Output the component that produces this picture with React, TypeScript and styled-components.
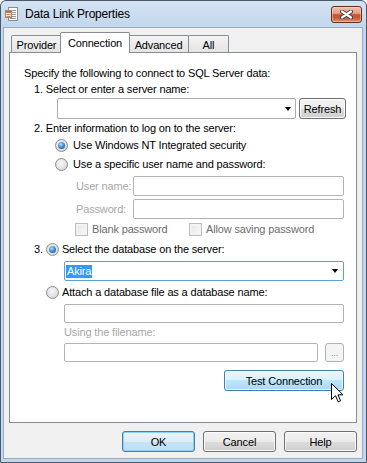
import React from "react";
import styled, { createGlobalStyle, css } from "styled-components";

const GlobalStyle = createGlobalStyle`
  html, body { margin: 0; padding: 0; background: #ffffff; }
  body {
    font-family: "Liberation Sans", Arial, sans-serif;
    font-size: 11px;
    letter-spacing: -0.15px;
    color: #000;
  }
  *, *::before, *::after { box-sizing: border-box; }
`;

const Window = styled.div`
  position: relative;
  width: 367px;
  height: 463px;
  border: 1px solid #4b5a6b;
  border-radius: 6px 6px 0 0;
  background: linear-gradient(#d4e3f3 0px, #c2d6ec 26px, #c2d6ec 100%);
  display: flex;
  flex-direction: column;
  overflow: hidden;
`;

const TitleBar = styled.div`
  flex: none;
  height: 26px;
  display: flex;
  align-items: center;
  padding: 0 4px;
`;

const TitleText = styled.div`
  flex: 1;
  margin-left: 7px;
  font-size: 12px;
  letter-spacing: -0.2px;
  color: #000;
`;

const CloseButton = styled.div`
  width: 31px;
  height: 17px;
  border: 1px solid #6b2a1a;
  border-radius: 3px;
  background: linear-gradient(#efbfac 0%, #e6a088 42%, #c4532f 52%, #c8603c 75%, #e09578 100%);
  box-shadow: inset 0 0 0 1px rgba(255, 225, 210, 0.45);
  display: flex;
  align-items: center;
  justify-content: center;
`;

const Client = styled.div`
  flex: 1;
  margin: 0 3px 3px 2px;
  border: 1px solid #98abc2;
  background: #f0f0f0;
  display: flex;
  flex-direction: column;
  padding: 4px 5px 6px 5px;
`;

const TabStrip = styled.div`
  position: relative;
  z-index: 1;
  flex: none;
  height: 20px;
  display: flex;
  align-items: flex-end;
  padding-left: 2px;
`;

const Tab = styled.div<{ $w: number; $active?: boolean; $ml?: number; $mr?: number }>`
  position: relative;
  flex: none;
  width: ${(p) => p.$w}px;
  height: 17px;
  margin-left: ${(p) => p.$ml ?? 0}px;
  margin-right: ${(p) => p.$mr ?? 0}px;
  border: 1px solid #898c95;
  border-bottom: none;
  border-radius: 2px 2px 0 0;
  background: linear-gradient(#f4f4f4, #e4e4e4);
  display: flex;
  align-items: center;
  justify-content: center;
  padding-top: 1px;
  ${(p) =>
    p.$active &&
    css`
      z-index: 2;
      height: 21px;
      margin-bottom: -1px;
      background: #ffffff;
      padding-top: 0;
      padding-bottom: 1px;
    `}
`;

const Panel = styled.div`
  flex: 1;
  border: 1px solid #898c95;
  background: #ffffff;
  display: flex;
  flex-direction: column;
  padding: 0 12px 0 0;
`;

const Row = styled.div<{ $indent: number; $mt: number; $h: number; $gap?: number }>`
  flex: none;
  display: flex;
  align-items: center;
  height: ${(p) => p.$h}px;
  margin-top: ${(p) => p.$mt}px;
  margin-left: ${(p) => p.$indent}px;
  gap: ${(p) => p.$gap ?? 0}px;
  white-space: nowrap;
`;

const Text = styled.span<{ $tone?: "label" | "check"; $w?: number }>`
  flex: none;
  color: ${(p) => (p.$tone === "label" ? "#a7a7a7" : p.$tone === "check" ? "#6d6d6d" : "#000")};
  ${(p) => p.$w !== undefined && css`width: ${p.$w}px;`}
`;

const Radio = styled.span<{ $checked?: boolean }>`
  position: relative;
  flex: none;
  width: 13px;
  height: 13px;
  border-radius: 50%;
  border: 1px solid #8d8e8e;
  background: radial-gradient(circle at 45% 40%, #f8f8f8 0%, #e6e6e6 45%, #c9c9c9 100%);
  ${(p) =>
    p.$checked &&
    css`
      &::after {
        content: "";
        position: absolute;
        left: 2px;
        top: 2px;
        width: 7px;
        height: 7px;
        border-radius: 50%;
        background: radial-gradient(circle at 40% 35%, #b9e0ff 0%, #4a98e4 40%, #0f3f86 100%);
      }
    `}
`;

const CheckBox = styled.span`
  flex: none;
  width: 13px;
  height: 13px;
  border: 1px solid #bdbdbd;
  background: linear-gradient(135deg, #e3e3e3, #fbfbfb);
  box-shadow: inset 0 0 0 2px #f3f3f3;
`;

const CheckGroup = styled.div<{ $w?: number }>`
  flex: none;
  display: flex;
  align-items: center;
  gap: 4px;
  ${(p) => p.$w !== undefined && css`width: ${p.$w}px;`}
`;

const Combo = styled.div<{ $w: number; $h: number; $focus?: boolean }>`
  flex: none;
  width: ${(p) => p.$w}px;
  height: ${(p) => p.$h}px;
  border: 1px solid ${(p) => (p.$focus ? "#5d9fe0" : "#acacac")};
  border-radius: 2px;
  background: #ffffff;
  display: flex;
  align-items: center;
  justify-content: space-between;
  padding: 0 ${(p) => (p.$focus ? 5 : 4)}px 0 1px;
`;

const Arrow = styled.span`
  flex: none;
  width: 0;
  height: 0;
  border-left: 3.5px solid transparent;
  border-right: 3.5px solid transparent;
  border-top: 4px solid #000;
`;

const Selected = styled.span`
  background: #3399ff;
  color: #ffffff;
  padding: 0 1px;
  line-height: 13px;
`;

const TextBox = styled.div<{ $w: number; $h: number }>`
  flex: none;
  width: ${(p) => p.$w}px;
  height: ${(p) => p.$h}px;
  border: 1px solid #b4b4b4;
  border-radius: 2px;
  background: #ffffff;
`;

type Variant = "normal" | "default" | "hot" | "disabled";

const Button = styled.button<{ $w: number; $h: number; $variant?: Variant }>`
  flex: none;
  width: ${(p) => p.$w}px;
  height: ${(p) => p.$h}px;
  margin: 0;
  padding: 0;
  font: inherit;
  letter-spacing: inherit;
  color: #000;
  border-radius: 3px;
  border: 1px solid #707070;
  background: linear-gradient(#f2f2f2 0%, #ebebeb 50%, #dddddd 50%, #cfcfcf 100%);
  box-shadow: inset 0 0 0 1px #fbfbfb;
  display: flex;
  align-items: center;
  justify-content: center;
  ${(p) =>
    p.$variant === "default" &&
    css`
      border-color: #3c7fb1;
      background: linear-gradient(#e9f4fb 0%, #dcedf8 50%, #c6e3f5 50%, #bddef3 100%);
      box-shadow: inset 0 0 0 1px #8fd0f4;
    `}
  ${(p) =>
    p.$variant === "hot" &&
    css`
      border-color: #3c7fb1;
      background: linear-gradient(#eaf6fd 0%, #d9f0fc 50%, #bee6fd 50%, #a7d9f5 100%);
      box-shadow: inset 0 0 0 1px #f4fbfe;
    `}
  ${(p) =>
    p.$variant === "disabled" &&
    css`
      border-color: #adb2b5;
      background: #f4f4f4;
      box-shadow: none;
      color: #7f8fa8;
      align-items: flex-end;
      padding-bottom: 3px;
      font-size: 9px;
    `}
`;

const ButtonBar = styled.div`
  flex: none;
  display: flex;
  justify-content: flex-end;
  gap: 8px;
  margin-top: 8px;
`;

const Cursor = styled.svg`
  position: absolute;
  left: 330px;
  top: 382px;
`;

const TitleIcon = () => (
  <svg width="13" height="14" viewBox="0 0 13 14">
    <rect x="3.5" y="0.5" width="9" height="13" fill="#ffffff" stroke="#8c8c8c" />
    <rect x="5" y="3" width="6" height="1" fill="#9a9a9a" />
    <rect x="5" y="5" width="6" height="1" fill="#9a9a9a" />
    <rect x="5" y="7" width="6" height="1" fill="#9a9a9a" />
    <rect x="5" y="9" width="6" height="1" fill="#9a9a9a" />
    <rect x="5" y="11" width="6" height="1" fill="#9a9a9a" />
    <rect x="0.5" y="3.5" width="6" height="7" fill="#f6efe6" stroke="#8c8c8c" />
    <rect x="1" y="4" width="5" height="2" fill="#e0682c" />
    <rect x="1.5" y="7" width="4" height="1" fill="#d9833f" />
    <rect x="1.5" y="9" width="4" height="1" fill="#d9833f" />
  </svg>
);

const CloseGlyph = () => (
  <svg width="13" height="9" viewBox="0 0 13 9">
    <path d="M2 1.5 L11 7.5 M11 1.5 L2 7.5" stroke="#3b3b3b" strokeWidth="4" strokeLinecap="round" />
    <path d="M2 1.5 L11 7.5 M11 1.5 L2 7.5" stroke="#ffffff" strokeWidth="2.2" strokeLinecap="round" />
  </svg>
);

export default function App() {
  return (
    <>
      <GlobalStyle />
      <Window>
        <TitleBar>
          <TitleIcon />
          <TitleText>Data Link Properties</TitleText>
          <CloseButton>
            <CloseGlyph />
          </CloseButton>
        </TitleBar>
        <Client>
          <TabStrip>
            <Tab $w={51}>Provider</Tab>
            <Tab $w={70} $active $ml={-2} $mr={-2}>
              Connection
            </Tab>
            <Tab $w={61}>Advanced</Tab>
            <Tab $w={41} $ml={-1}>
              All
            </Tab>
          </TabStrip>
          <Panel>
            <Row $indent={14} $mt={13} $h={14}>
              <Text>Specify the following to connect to SQL Server data:</Text>
            </Row>
            <Row $indent={24} $mt={2} $h={14}>
              <Text>1. Select or enter a server name:</Text>
            </Row>
            <Row $indent={47} $mt={2} $h={21} $gap={3}>
              <Combo $w={239} $h={21}>
                <span />
                <Arrow />
              </Combo>
              <Button $w={47} $h={21}>
                Refresh
              </Button>
            </Row>
            <Row $indent={24} $mt={2} $h={14}>
              <Text>2. Enter information to log on to the server:</Text>
            </Row>
            <Row $indent={45} $mt={2} $h={16} $gap={5}>
              <Radio $checked />
              <Text>Use Windows NT Integrated security</Text>
            </Row>
            <Row $indent={45} $mt={3} $h={16} $gap={5}>
              <Radio />
              <Text>Use a specific user name and password:</Text>
            </Row>
            <Row $indent={66} $mt={4} $h={20}>
              <Text $tone="label" $w={57}>
                User name:
              </Text>
              <TextBox $w={211} $h={20} />
            </Row>
            <Row $indent={66} $mt={3} $h={20}>
              <Text $tone="label" $w={57}>
                Password:
              </Text>
              <TextBox $w={211} $h={20} />
            </Row>
            <Row $indent={65} $mt={3} $h={14}>
              <CheckGroup $w={114}>
                <CheckBox />
                <Text $tone="check">Blank password</Text>
              </CheckGroup>
              <CheckGroup>
                <CheckBox />
                <Text $tone="check">Allow saving password</Text>
              </CheckGroup>
            </Row>
            <Row $indent={24} $mt={5} $h={16} $gap={3}>
              <Text>3.</Text>
              <Radio $checked />
              <Text>Select the database on the server:</Text>
            </Row>
            <Row $indent={54} $mt={4} $h={20}>
              <Combo $w={280} $h={20} $focus>
                <Selected>Akira</Selected>
                <Arrow />
              </Combo>
            </Row>
            <Row $indent={36} $mt={3} $h={16} $gap={3}>
              <Radio />
              <Text>Attach a database file as a database name:</Text>
            </Row>
            <Row $indent={54} $mt={4} $h={19}>
              <TextBox $w={280} $h={19} />
            </Row>
            <Row $indent={54} $mt={2} $h={14}>
              <Text $tone="label">Using the filename:</Text>
            </Row>
            <Row $indent={54} $mt={4} $h={19} $gap={7}>
              <TextBox $w={254} $h={19} />
              <Button $w={19} $h={19} $variant="disabled">
                ...
              </Button>
            </Row>
            <Row $indent={214} $mt={8} $h={21}>
              <Button $w={120} $h={21} $variant="hot">
                Test Connection
              </Button>
            </Row>
          </Panel>
          <ButtonBar>
            <Button $w={73} $h={21} $variant="default">
              OK
            </Button>
            <Button $w={73} $h={21}>
              Cancel
            </Button>
            <Button $w={73} $h={21}>
              Help
            </Button>
          </ButtonBar>
        </Client>
        <Cursor width="13" height="21" viewBox="0 0 13 21">
          <path
            d="M0.5 0.5 L0.5 16.5 L4.5 12.7 L7.2 18.8 L9.6 17.8 L7 11.8 L12 11.8 Z"
            fill="#ffffff"
            stroke="#000000"
            strokeWidth="1"
            strokeLinejoin="miter"
          />
        </Cursor>
      </Window>
    </>
  );
}
